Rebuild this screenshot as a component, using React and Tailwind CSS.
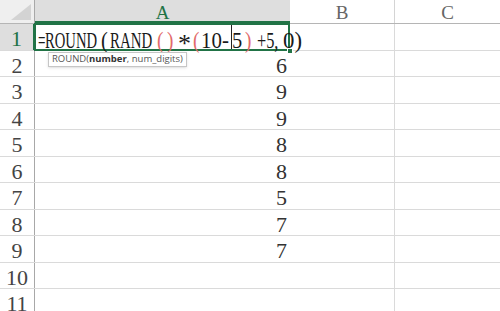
import React from "react";

const rows = [
  { n: 1, v: null },
  { n: 2, v: "6" },
  { n: 3, v: "9" },
  { n: 4, v: "9" },
  { n: 5, v: "8" },
  { n: 6, v: "8" },
  { n: 7, v: "5" },
  { n: 8, v: "7" },
  { n: 9, v: "7" },
  { n: 10, v: null },
  { n: 11, v: null },
];

function Formula() {
  return (
    <div className="flex w-max items-start whitespace-nowrap text-[24px] leading-[24px] text-[#1a1a1a]">
      <span className="inline-block shrink-0 w-[7px] ml-[3px]"><span className="inline-block origin-left scale-x-[0.55]">=</span></span>
      <span className="inline-block shrink-0 w-[56px]"><span className="inline-block origin-left scale-x-[0.61]">ROUND</span></span>
      <span className="inline-block shrink-0 w-[9px]"><span className="inline-block origin-left scale-x-[0.85]">(</span></span>
      <span className="inline-block shrink-0 w-[47px]"><span className="inline-block origin-left scale-x-[0.62]">RAND</span></span>
      <span className="inline-block shrink-0 w-[10px] text-[#e26a6a]"><span className="inline-block origin-left scale-x-[0.8]">(</span></span>
      <span className="inline-block shrink-0 w-[11px] text-[#e26a6a]"><span className="inline-block origin-left scale-x-[0.8]">)</span></span>
      <span className="inline-block shrink-0 w-[15px]"><span className="inline-block origin-left scale-x-[1] translate-y-[4px] text-[26px]">*</span></span>
      <span className="inline-block shrink-0 w-[8px] text-[#e26a6a]"><span className="inline-block origin-left scale-x-[0.8]">(</span></span>
      <span className="inline-block shrink-0 w-[30px]"><span className="inline-block origin-left scale-x-[0.87]">10-</span></span>
      <span className="inline-block shrink-0 w-[1px] h-[25px] -mt-[4px] bg-[#222]" />
      <span className="inline-block shrink-0 w-[13px]"><span className="inline-block origin-left scale-x-[0.85]">5</span></span>
      <span className="inline-block shrink-0 w-[12px] text-[#e26a6a]"><span className="inline-block origin-left scale-x-[0.8]">)</span></span>
      <span className="inline-block shrink-0 w-[26px]"><span className="inline-block origin-left scale-x-[0.68]">+5,</span></span>
      <span className="inline-block shrink-0 w-[24px]"><span className="inline-block origin-left scale-x-[0.95]">0)</span></span>
    </div>
  );
}

export default function App() {
  return (
    <div
      className="w-[500px] h-[311px] overflow-hidden bg-white"
      style={{ fontFamily: '"Liberation Serif", "Times New Roman", serif' }}
    >
      {/* column headers */}
      <div className="flex h-[24px] border-b border-[#b5b5b5]">
        <div className="relative w-[35px] bg-[#efefef] border-r border-[#a8a8a8] overflow-hidden">
          <div className="absolute right-[3px] bottom-[3px] w-0 h-0 border-l-[20px] border-l-transparent border-b-[16px] border-b-[#d3d3d3]" />
        </div>
        <div className="w-[255px] bg-[#dedede] border-b-2 border-[#217346] flex justify-center items-start pt-[3px] text-[19px] leading-[20px] text-[#217346]">
          A
        </div>
        <div className="w-[105px] border-r border-[#d4d4d4] flex justify-center items-start pt-[3px] text-[19px] leading-[20px] text-[#666]">
          B
        </div>
        <div className="w-[105px] flex justify-center items-start pt-[3px] text-[19px] leading-[20px] text-[#666]">
          C
        </div>
      </div>

      {rows.map((r) => (
        <div key={r.n} className="flex h-[26.5px] border-b border-[#dadada]">
          <div
            className={
              r.n === 1
                ? "w-[35px] shrink-0 bg-[#dedede] border-r-2 border-[#217346] flex justify-center pt-[4px] text-[22px] leading-[22px] text-[#217346]"
                : "w-[35px] shrink-0 border-r border-[#a8a8a8] flex justify-center pt-[4px] text-[22px] leading-[22px] text-[#444]"
            }
          >
            {r.n}
          </div>
          {r.n === 1 ? (
            <div className="relative z-10 w-[255px] shrink-0 pt-[4px]">
              <div className="absolute -left-[1px] -top-[1px] -bottom-[1px] right-0 border-2 border-[#217346] pointer-events-none" />
              <div className="absolute -right-[3px] -bottom-[4px] w-[6px] h-[6px] bg-[#217346] border border-white" />
              <Formula />
              <div
                className="absolute left-[13px] top-[28px] px-[3px] h-[15px] flex items-center bg-white border border-[#c6c6c6] shadow-sm text-[9.5px] text-[#555] whitespace-nowrap"
                style={{ fontFamily: '"Open Sans", "Noto Sans", sans-serif' }}
              >
                ROUND(<b className="text-[#333]">number</b>, num_digits)
              </div>
            </div>
          ) : (
            <div className="w-[255px] shrink-0 flex justify-end pr-[3px] pt-[4px] text-[22px] leading-[22px] text-[#333]">
              {r.v}
            </div>
          )}
          <div className="w-[105px] shrink-0 border-r border-[#dadada]" />
          <div className="w-[105px] shrink-0" />
        </div>
      ))}
    </div>
  );
}
